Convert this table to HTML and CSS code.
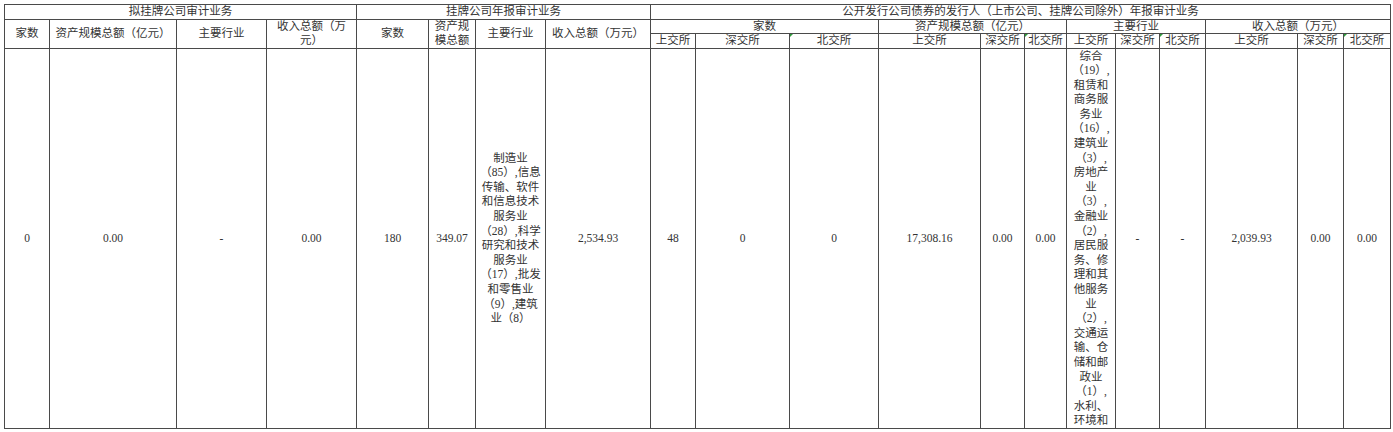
FILE: index.html
```html
<!DOCTYPE html>
<html lang="zh-CN">
<head>
<meta charset="utf-8">
<title>审计业务</title>
<link rel="stylesheet" href="styles.css">
</head>
<body>
<table class="grid">
  <colgroup>
    <col class="w45"><col class="w127"><col class="w90"><col class="w90">
    <col class="w72"><col class="w47"><col class="w70"><col class="w105">
    <col class="w45"><col class="w94"><col class="w89">
    <col class="w102"><col class="w44"><col class="w42">
    <col class="w49"><col class="w44"><col class="w46">
    <col class="w92"><col class="w46"><col class="w47">
  </colgroup>
  <thead>
    <tr class="h1">
      <th colspan="4">拟挂牌公司审计业务</th>
      <th colspan="4">挂牌公司年报审计业务</th>
      <th colspan="12">公开发行公司债券的发行人（上市公司、挂牌公司除外）年报审计业务</th>
    </tr>
    <tr class="h2">
      <th rowspan="2">家数</th>
      <th rowspan="2">资产规模总额（亿元）</th>
      <th rowspan="2">主要行业</th>
      <th rowspan="2">收入总额（万元）</th>
      <th rowspan="2">家数</th>
      <th rowspan="2">资产规模总额</th>
      <th rowspan="2">主要行业</th>
      <th rowspan="2">收入总额（万元）</th>
      <th colspan="3">家数</th>
      <th colspan="3">资产规模总额（亿元）</th>
      <th colspan="3">主要行业</th>
      <th colspan="3">收入总额（万元）</th>
    </tr>
    <tr class="h3">
      <th>上交所</th><th>深交所</th><th class="mark">北交所</th>
      <th>上交所</th><th>深交所</th><th class="mark">北交所</th>
      <th>上交所</th><th>深交所</th><th class="mark">北交所</th>
      <th>上交所</th><th>深交所</th><th class="mark">北交所</th>
    </tr>
  </thead>
  <tbody>
    <tr>
      <td>0</td>
      <td>0.00</td>
      <td>-</td>
      <td>0.00</td>
      <td>180</td>
      <td>349.07</td>
      <td>制造业<br>（85）,信息<br>传输、软件<br>和信息技术<br>服务业<br>（28）,科学<br>研究和技术<br>服务业<br>（17）,批发<br>和零售业<br>（9）,建筑<br>业（8）</td>
      <td>2,534.93</td>
      <td>48</td>
      <td>0</td>
      <td>0</td>
      <td>17,308.16</td>
      <td>0.00</td>
      <td>0.00</td>
      <td class="top">综合<br>（19）,<br>租赁和<br>商务服<br>务业<br>（16）,<br>建筑业<br>（3）,<br>房地产<br>业<br>（3）,<br>金融业<br>（2）,<br>居民服<br>务、修<br>理和其<br>他服务<br>业<br>（2）,<br>交通运<br>输、仓<br>储和邮<br>政业<br>（1）,<br>水利、<br>环境和</td>
      <td>-</td>
      <td>-</td>
      <td>2,039.93</td>
      <td>0.00</td>
      <td>0.00</td>
    </tr>
  </tbody>
</table>
</body>
</html>
```

FILE: styles.css
```css
html, body {
  margin: 0;
  padding: 0;
  background: #ffffff;
}

body {
  padding: 4px 0 0 4px;
  font-family: "Liberation Serif", "Noto Sans CJK SC", serif;
  font-size: 11.5px;
  color: #333333;
}

.grid {
  border-collapse: collapse;
  table-layout: fixed;
  width: 1386px;
}

.grid th,
.grid td {
  border: 1px solid #4a4a4a;
  padding: 0 2px;
  text-align: center;
  vertical-align: middle;
  font-weight: normal;
  overflow: hidden;
}

.grid th {
  line-height: 13.5px;
}

.grid td {
  line-height: 14.6px;
}

.grid td.top {
  vertical-align: top;
}

.mark {
  position: relative;
}

.mark::before {
  content: "";
  position: absolute;
  left: 0;
  top: 0;
  border-top: 3px solid #2e9a3a;
  border-right: 3px solid transparent;
}

.w42 { width: 42px; }
.w44 { width: 44px; }
.w45 { width: 45px; }
.w46 { width: 46px; }
.w47 { width: 47px; }
.w49 { width: 49px; }
.w70 { width: 70px; }
.w72 { width: 72px; }
.w89 { width: 89px; }
.w90 { width: 90px; }
.w92 { width: 92px; }
.w94 { width: 94px; }
.w102 { width: 102px; }
.w105 { width: 105px; }
.w127 { width: 127px; }
```
